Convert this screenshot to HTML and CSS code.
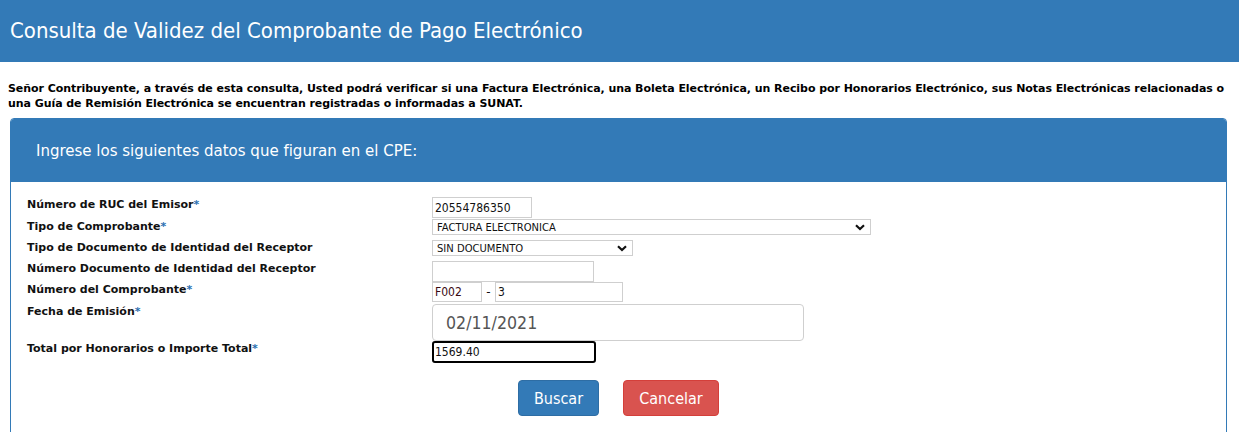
FILE: index.html
```html
<!DOCTYPE html>
<html lang="es">
<head>
<meta charset="utf-8">
<title>Consulta de Validez del Comprobante de Pago Electrónico</title>
<link rel="stylesheet" href="styles.css">
</head>
<body>
<header class="topbar">Consulta de Validez del Comprobante de Pago Electrónico</header>
<p class="intro">Señor Contribuyente, a través de esta consulta, Usted podrá verificar si una Factura Electrónica, una Boleta Electrónica, un Recibo por Honorarios Electrónico, sus Notas Electrónicas relacionadas o una Guía de Remisión Electrónica se encuentran registradas o informadas a SUNAT.</p>
<section class="panel">
  <div class="panel-head">Ingrese los siguientes datos que figuran en el CPE:</div>
  <div class="panel-body">
    <div class="form">
      <label class="lbl">Número de RUC del Emisor<span class="req">*</span></label>
      <div class="ctl"><input class="inp w-ruc" type="text" value="20554786350"></div>

      <label class="lbl">Tipo de Comprobante<span class="req">*</span></label>
      <div class="ctl">
        <div class="sel w-tipo"><span>FACTURA ELECTRONICA</span>
          <svg class="chev" width="10" height="7" viewBox="0 0 10 7"><path d="M1 1.2 L5 5 L9 1.2" fill="none" stroke="#111" stroke-width="2.2"/></svg>
        </div>
      </div>

      <label class="lbl">Tipo de Documento de Identidad del Receptor</label>
      <div class="ctl">
        <div class="sel w-doc"><span>SIN DOCUMENTO</span>
          <svg class="chev" width="10" height="7" viewBox="0 0 10 7"><path d="M1 1.2 L5 5 L9 1.2" fill="none" stroke="#111" stroke-width="2.2"/></svg>
        </div>
      </div>

      <label class="lbl">Número Documento de Identidad del Receptor</label>
      <div class="ctl"><input class="inp w-num" type="text" value=""></div>

      <label class="lbl">Número del Comprobante<span class="req">*</span></label>
      <div class="ctl">
        <input class="inp w-serie" type="text" value="F002">
        <span class="dash">-</span>
        <input class="inp w-corr" type="text" value="3">
      </div>

      <label class="lbl">Fecha de Emisión<span class="req">*</span></label>
      <div class="ctl"><input class="date" type="text" value="02/11/2021"></div>

      <label class="lbl">Total por Honorarios o Importe Total<span class="req">*</span></label>
      <div class="ctl"><input class="inp total" type="text" value="1569.40"></div>
    </div>
    <div class="actions">
      <button class="btn btn-primary" type="button">Buscar</button>
      <button class="btn btn-danger" type="button">Cancelar</button>
    </div>
  </div>
</section>
</body>
</html>
```
FILE: styles.css
```css
* { box-sizing: border-box; }
html, body { margin: 0; padding: 0; background: #fff; }
body {
  font-family: "DejaVu Sans", Verdana, sans-serif;
  color: #111;
}
.topbar {
  background: #337ab7;
  color: #fff;
  height: 62px;
  padding: 0 0 2px 10px;
  display: flex;
  align-items: center;
  font-family: "DejaVu Sans Condensed", "DejaVu Sans", sans-serif;
  font-size: 22px;
}
.intro {
  margin: 0;
  padding: 19px 12px 0 8px;
  font-size: 11px;
  line-height: 15px;
  font-weight: bold;
  letter-spacing: -0.055px;
  color: #000;
}
.panel {
  margin: 7px 12px 0 10px;
  border: 1px solid #337ab7;
  border-radius: 4px 4px 0 0;
  overflow: hidden;
}
.panel-head {
  background: #337ab7;
  color: #fff;
  height: 63px;
  padding: 0 0 2px 25px;
  display: flex;
  align-items: center;
  font-family: "DejaVu Sans Condensed", "DejaVu Sans", sans-serif;
  font-size: 16.7px;
}
.panel-body {
  padding: 15px 16px 30px 16px;
}
.form {
  display: grid;
  grid-template-columns: 405px 1fr;
  grid-template-rows: 22px 21px 21px 21px 22px 37px 22px;
}
.lbl {
  font-size: 11px;
  font-weight: bold;
  line-height: 16px;
  color: #111;
  align-self: start;
}
.req { color: #2a6fb0; }
.ctl { display: flex; align-items: flex-start; }
.inp {
  font-family: "DejaVu Sans Condensed", "DejaVu Sans", sans-serif;
  font-size: 12px;
  color: #111;
  border: 1px solid #cfcfcf;
  background: #fff;
  padding: 0 2px;
  margin: 0;
  outline: none;
}
.w-ruc { width: 100px; height: 21px; }
.w-num { width: 162px; height: 21px; }
.w-serie { width: 50px; height: 20px; color: #3a0a12; }
.w-corr { width: 128px; height: 20px; }
.dash { width: 13px; text-align: center; font-size: 12px; line-height: 20px; }
.sel {
  height: 16px;
  border: 1px solid #cfcfcf;
  display: flex;
  align-items: center;
  justify-content: space-between;
  padding: 0 5px 0 4px;
  font-family: "DejaVu Sans", sans-serif;
  font-size: 10px;
  color: #111;
}
.w-tipo { width: 439px; }
.w-doc { width: 201px; }
.chev { display: block; }
.date {
  font-family: "DejaVu Sans Condensed", "DejaVu Sans", sans-serif;
  width: 372px;
  height: 37px;
  border: 1px solid #cfcfcf;
  border-radius: 4px;
  padding: 0 13px;
  font-size: 17.6px;
  color: #555;
  margin: 0;
  outline: none;
}
.total {
  width: 164px;
  height: 22px;
  border: 2px solid #000;
  border-radius: 3px;
  padding: 0 1px;
}
.actions {
  display: flex;
  justify-content: center;
  gap: 24px;
  margin-top: 17px;
}
.btn {
  font-family: "DejaVu Sans Condensed", "DejaVu Sans", sans-serif;
  font-size: 16px;
  height: 36px;
  padding: 0;
  border-radius: 4px;
  color: #fff;
  border: 1px solid transparent;
}
.btn-primary { background: #337ab7; border-color: #2e6da4; width: 81px; }
.btn-danger { background: #d9534f; border-color: #d43f3a; width: 96px; }
```
